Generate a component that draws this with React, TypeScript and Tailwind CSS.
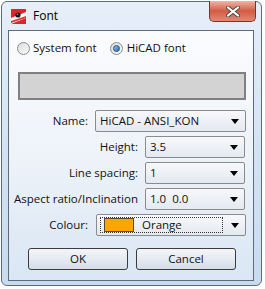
import React from 'react';

const font = { fontFamily: '"Open Sans", "Noto Sans", sans-serif' };

const Arrow = () => (
  <svg width="8" height="5" viewBox="0 0 8 5" className="shrink-0">
    <path d="M0 0h8L4 5z" fill="#000" />
  </svg>
);

const Combo = ({ w, children }: { w: string; children: React.ReactNode }) => (
  <div
    className={`${w} h-[22px] flex items-center justify-between pl-[4px] pr-[6px] border border-[#8b8b8b] rounded-[2px] bg-gradient-to-b from-[#f7f8fa] to-[#e4e9f0]`}
  >
    <span className="leading-none">{children}</span>
    <Arrow />
  </div>
);

const Row = ({ label, wide, children }: { label: string; wide: boolean; children: React.ReactNode }) => (
  <div className="flex items-center mt-[4px] first:mt-0">
    <div className={`${wide ? 'w-[80px]' : 'w-[130px]'} text-right pr-[1px] whitespace-nowrap`}>{label}</div>
    <div className="ml-[6px]">{children}</div>
  </div>
);

const Radio = ({ checked }: { checked?: boolean }) => (
  <div className="w-[13px] h-[13px] rounded-full border border-[#8c8c8c] bg-gradient-to-br from-[#dcdcdc] to-[#fafafa] flex items-center justify-center">
    {checked && (
      <div className="w-[7px] h-[7px] rounded-full border border-[#1c5180] bg-gradient-to-br from-[#8fc4ef] to-[#1f6fb5]" />
    )}
  </div>
);

const Button = ({ children }: { children: React.ReactNode }) => (
  <div className="w-[100px] h-[22px] flex items-center justify-center border border-[#3c3c3c] rounded-[3px] bg-gradient-to-b from-[#f3f5f8] via-[#e6ebf1] to-[#d3dce7]">
    {children}
  </div>
);

export default function App() {
  return (
    <div className="w-[265px] h-[289px] bg-white pt-[1px] text-[11.5px] text-[#111]" style={font}>
      <div className="relative ml-[1px] w-[261px] h-[285px] rounded-[6px] border border-[#5b6d80] bg-gradient-to-b from-[#e7eff8] via-[#d4e3f3] to-[#c8dbef]">
        {/* title bar */}
        <div className="h-[28px] flex items-center pl-[9px]">
          <svg width="15" height="15" viewBox="0 0 15 15">
            <rect width="15" height="15" fill="#d8262b" />
            <path d="M0 9 L15 3 L15 9 L0 15z" fill="#fff" />
            <path d="M0 12 L15 7 L15 9 L0 14z" fill="#e0383a" />
            <circle cx="7" cy="6" r="2.6" fill="#1a1a1a" />
            <circle cx="6.4" cy="5.3" r="0.8" fill="#9a9a9a" />
          </svg>
          <span className="ml-[7px] text-[12px] text-black">Font</span>
        </div>
        {/* close button */}
        <div className="absolute top-[-1px] right-[5px] w-[47px] h-[21px] rounded-b-[5px] border border-[#7a3428] border-t-0 bg-gradient-to-b from-[#eeb4a6] via-[#d25a43] to-[#e08a75] flex items-center justify-center">
          <svg width="14" height="11" viewBox="0 0 14 11">
            <path d="M2 1.5 L12 9.5 M12 1.5 L2 9.5" stroke="#4a4a4a" strokeWidth="4" strokeLinecap="round" />
            <path d="M2 1.5 L12 9.5 M12 1.5 L2 9.5" stroke="#fff" strokeWidth="2.2" strokeLinecap="round" />
          </svg>
        </div>
        {/* client area */}
        <div className="ml-[6px] w-[246px] h-[251px] border border-[#5d6b7a] bg-gradient-to-b from-[#fbfcfe] via-[#eef3f9] to-[#d9e6f4]">
          <div className="flex items-center h-[16px] mt-[9px] pl-[8px]">
            <Radio />
            <span className="ml-[3px]">System font</span>
            <div className="ml-[13px]">
              <Radio checked />
            </div>
            <span className="ml-[4px]">HiCAD font</span>
          </div>
          <div className="ml-[9px] mt-[16px] w-[228px] h-[28px] bg-[#d3d3d3] border-2 border-[#808080]" />
          <div className="mt-[10px]">
            <Row label="Name:" wide>
              <Combo w="w-[151px]">HiCAD - ANSI_KON</Combo>
            </Row>
            <Row label="Height:" wide={false}>
              <Combo w="w-[100px]">3.5</Combo>
            </Row>
            <Row label="Line spacing:" wide={false}>
              <Combo w="w-[100px]">1</Combo>
            </Row>
            <Row label="Aspect ratio/Inclination" wide={false}>
              <Combo w="w-[100px]">1.0&nbsp;&nbsp;0.0</Combo>
            </Row>
            <Row label="Colour:" wide>
              <div className="ml-[1px] w-[150px] h-[22px] flex items-center justify-between pl-[3px] pr-[6px] border border-[#8b8b8b] rounded-[2px] bg-gradient-to-b from-[#f7f8fa] to-[#e4e9f0]">
                <div className="w-[123px] h-[16px] flex items-center border border-dotted border-[#333] pl-[3px]">
                  <div className="w-[30px] h-[14px] bg-[#ffa500] border border-[#5a4a2a]" />
                  <span className="ml-[8px] leading-none">Orange</span>
                </div>
                <Arrow />
              </div>
            </Row>
          </div>
          <div className="flex mt-[12px] pl-[19px] gap-[8px]">
            <Button>OK</Button>
            <Button>Cancel</Button>
          </div>
        </div>
      </div>
    </div>
  );
}
